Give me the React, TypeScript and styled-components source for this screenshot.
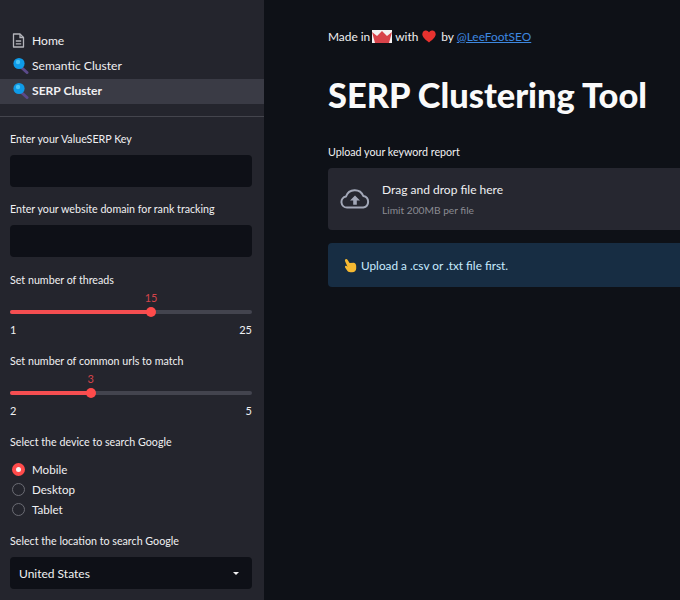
import React from 'react';
import styled, { createGlobalStyle } from 'styled-components';

const fontStack = `Lato, "Noto Sans", sans-serif`;

const GlobalStyle = createGlobalStyle`
  html, body { margin: 0; padding: 0; background: #0e1117; }
  body { font-family: ${fontStack}; overflow: hidden; }
  * { box-sizing: border-box; }
`;

const Page = styled.div`
  width: 680px;
  height: 600px;
  display: flex;
  overflow: hidden;
  background: #0e1117;
  color: #fafafa;
`;

const Sidebar = styled.aside`
  width: 264px;
  flex: none;
  height: 600px;
  overflow: hidden;
  background: #24252d;
  padding-top: 29px;
`;

const Nav = styled.nav`
  display: flex;
  flex-direction: column;
  padding-bottom: 12px;
  border-bottom: 1px solid #44454d;
`;

const NavItem = styled.a<{ $active?: boolean }>`
  height: 25px;
  display: flex;
  align-items: center;
  gap: 3px;
  padding-left: 12px;
  padding-bottom: 2px;
  font-size: 12.1px;
  font-weight: ${p => (p.$active ? 700 : 400)};
  color: #f0f0f2;
  background: ${p => (p.$active ? '#3a3b45' : 'transparent')};
`;

const NavIcon = styled.svg`
  width: 17px;
  height: 17px;
  flex: none;
`;

const Controls = styled.div`
  display: flex;
  flex-direction: column;
  padding: 15px 12px 0 10px;
`;

const Label = styled.label`
  display: block;
  font-size: 10.7px;
  line-height: 14px;
  color: #f0f0f2;
`;

const Field = styled.div<{ $mb?: number }>`
  margin-bottom: ${p => p.$mb ?? 15}px;
`;

const TextInput = styled.div`
  height: 32px;
  margin-top: 9px;
  border-radius: 4px;
  background: #0e1017;
`;

const SliderBox = styled.div`
  position: relative;
  height: 52px;
  margin-top: 3px;
`;

const Track = styled.div`
  position: absolute;
  left: 0;
  right: 0;
  top: 20px;
  height: 4px;
  border-radius: 2px;
  background: #43444e;
`;

const TrackFill = styled.div`
  height: 100%;
  border-radius: 2px;
  background: #f54e51;
`;

const Thumb = styled.div`
  position: absolute;
  top: 17px;
  width: 10px;
  height: 10px;
  margin-left: -5px;
  border-radius: 50%;
  background: #ff4b4b;
`;

const SliderValue = styled.span`
  position: absolute;
  top: 1px;
  transform: translateX(-50%);
  font-size: 11px;
  line-height: 14px;
  color: #d2444a;
`;

const SliderEnds = styled.div`
  position: absolute;
  left: 0;
  right: 0;
  top: 33px;
  display: flex;
  justify-content: space-between;
  font-size: 11px;
  line-height: 14px;
  color: #f0f0f2;
`;

const RadioGroup = styled.div`
  display: flex;
  flex-direction: column;
  margin-top: 10px;
`;

const RadioRow = styled.div`
  height: 20.4px;
  display: flex;
  align-items: center;
  gap: 7px;
  padding-left: 2px;
  font-size: 11.6px;
  color: #f0f0f2;
`;

const RadioDot = styled.span<{ $on?: boolean }>`
  width: 13px;
  height: 13px;
  border-radius: 50%;
  flex: none;
  background: ${p => (p.$on ? '#ff4b4b' : 'transparent')};
  border: ${p => (p.$on ? '4px solid #ff4b4b' : '1.5px solid #6b6c74')};
  position: relative;
  &::after {
    content: '';
    display: ${p => (p.$on ? 'block' : 'none')};
    position: absolute;
    inset: 0;
    border-radius: 50%;
    background: #f6f6f6;
  }
`;

const Select = styled.div`
  height: 32px;
  margin-top: 9px;
  padding: 0 13px 0 9px;
  display: flex;
  align-items: center;
  justify-content: space-between;
  border-radius: 4px;
  background: #0e1017;
  font-size: 12px;
  color: #f0f0f2;
`;

const Caret = styled.span`
  width: 0;
  height: 0;
  border-left: 3.5px solid transparent;
  border-right: 3.5px solid transparent;
  border-top: 3.5px solid #f0f0f2;
`;

const Main = styled.main`
  flex: 1;
  min-width: 0;
  padding: 28px 0 0 64px;
`;

const Byline = styled.p`
  margin: 0;
  display: flex;
  align-items: center;
  height: 16px;
  font-size: 11.9px;
  color: #f0f0f2;
`;

const BylineLink = styled.a`
  color: #3d88e0;
  text-decoration: underline;
`;

const Title = styled.h1`
  margin: 29px 0 0;
  font-size: 34.4px;
  line-height: 44px;
  font-weight: 900;
  color: #fafafa;
  white-space: nowrap;
`;

const UploadLabel = styled(Label)`
  margin-top: 28px;
`;

const Dropzone = styled.div`
  height: 62px;
  margin-top: 9px;
  padding-left: 12px;
  display: flex;
  align-items: center;
  gap: 12px;
  border-radius: 4px 0 0 4px;
  background: #262730;
`;

const DropText = styled.div`
  display: flex;
  flex-direction: column;
  gap: 5px;
`;

const DropTitle = styled.span`
  font-size: 12px;
  line-height: 17px;
  color: #f0f0f2;
`;

const DropHint = styled.span`
  font-size: 10.2px;
  line-height: 14px;
  color: #8a8b92;
`;

const Notice = styled.div`
  height: 44px;
  margin-top: 13px;
  padding-left: 15px;
  display: flex;
  align-items: center;
  gap: 4px;
  border-radius: 4px 0 0 4px;
  background: #172d43;
  font-size: 11.8px;
  color: #c7ebff;
`;

const SearchIcon = () => (
  <NavIcon viewBox="0 0 17 17">
    <line x1="10" y1="11" x2="15" y2="15.5" stroke="#5b4a8a" strokeWidth="3" strokeLinecap="round" />
    <circle cx="7" cy="6.5" r="5.6" fill="#0e9be8" />
    <circle cx="6" cy="5" r="2.2" fill="#4cc4f5" />
  </NavIcon>
);

const PageIcon = () => (
  <NavIcon viewBox="0 0 17 17" fill="none" stroke="#b4b5bb" strokeWidth="1.3">
    <path d="M1.500 2h6.500l3.500 3.500V15h-10z" strokeLinejoin="round" />
    <path d="M8 2v3.500h3.500M3.800 9h5.400M3.800 11.800h5.400" />
  </NavIcon>
);

const CrownFlag = () => (
  <svg width="20" height="13" viewBox="0 0 20 13" style={{ margin: '0 3px 0 2px' }}>
    <rect width="20" height="13" fill="#f4f2f2" />
    <path d="M0 2l5 4 5-5 5 5 5-4-3 11H3z" fill="#d8434a" />
  </svg>
);

const Heart = () => (
  <svg width="14" height="13" viewBox="0 0 14 13" style={{ margin: '0 5px 0 4px' }}>
    <path d="M7 12.5C2 8.6.3 6.5.3 4A3.6 3.6 0 0 1 7 2.2 3.6 3.6 0 0 1 13.7 4c0 2.5-1.7 4.6-6.7 8.5z" fill="#e8322f" />
  </svg>
);

const CloudUpload = () => (
  <svg width="30" height="20" viewBox="0 0 30 20" fill="none">
    <path
      d="M7 18.6a5.6 5.6 0 0 1-1-11.1A9.2 9.2 0 0 1 23.3 7a5.9 5.9 0 0 1 0 11.6z"
      stroke="#a3a8b8"
      strokeWidth="2"
      strokeLinejoin="round"
    />
    <path d="M15 6.5l-5 5h3.2v4.3h3.6v-4.3H20z" fill="#a3a8b8" />
  </svg>
);

const PointingHand = () => (
  <svg width="14" height="15" viewBox="0 0 14 15">
    <path
      d="M2.5 1.2c.8-.6 1.6-.2 2 .5L6.6 5l4-.2c1.5.1 2.6 1.4 2.6 3.2v2.5c0 2.300-1.700 3.800-4 3.800H7.500c-1.700 0-2.900-.8-3.700-2.200L2.100 9.400c-.3-.7 0-1.400.6-1.600.6-.2 1.100 0 1.500.6l.4.6-2.400-5.600c-.4-.9-.4-1.700.3-2.200z"
      fill="#f5b932"
    />
  </svg>
);

const Slider = ({ min, max, value, pct }: { min: number; max: number; value: number; pct: number }) => (
  <SliderBox>
    <SliderValue style={{ left: `${pct}%` }}>{value}</SliderValue>
    <Track>
      <TrackFill style={{ width: `${pct}%` }} />
    </Track>
    <Thumb style={{ left: `${pct}%` }} />
    <SliderEnds>
      <span>{min}</span>
      <span>{max}</span>
    </SliderEnds>
  </SliderBox>
);

export default function App() {
  return (
    <>
      <GlobalStyle />
      <Page>
        <Sidebar>
          <Nav>
            <NavItem><PageIcon />Home</NavItem>
            <NavItem><SearchIcon />Semantic Cluster</NavItem>
            <NavItem $active><SearchIcon />SERP Cluster</NavItem>
          </Nav>
          <Controls>
            <Field>
              <Label>Enter your ValueSERP Key</Label>
              <TextInput />
            </Field>
            <Field $mb={16}>
              <Label>Enter your website domain for rank tracking</Label>
              <TextInput />
            </Field>
            <Field $mb={12}>
              <Label>Set number of threads</Label>
              <Slider min={1} max={25} value={15} pct={58.3} />
            </Field>
            <Field $mb={12}>
              <Label>Set number of common urls to match</Label>
              <Slider min={2} max={5} value={3} pct={33.3} />
            </Field>
            <Field $mb={14}>
              <Label>Select the device to search Google</Label>
              <RadioGroup>
                <RadioRow><RadioDot $on />Mobile</RadioRow>
                <RadioRow><RadioDot />Desktop</RadioRow>
                <RadioRow><RadioDot />Tablet</RadioRow>
              </RadioGroup>
            </Field>
            <Field>
              <Label>Select the location to search Google</Label>
              <Select>
                United States
                <Caret />
              </Select>
            </Field>
          </Controls>
        </Sidebar>
        <Main>
          <Byline>
            Made in <CrownFlag /> with <Heart /> by&nbsp;<BylineLink>@LeeFootSEO</BylineLink>
          </Byline>
          <Title>SERP Clustering Tool</Title>
          <UploadLabel>Upload your keyword report</UploadLabel>
          <Dropzone>
            <CloudUpload />
            <DropText>
              <DropTitle>Drag and drop file here</DropTitle>
              <DropHint>Limit 200MB per file</DropHint>
            </DropText>
          </Dropzone>
          <Notice>
            <PointingHand />
            Upload a .csv or .txt file first.
          </Notice>
        </Main>
      </Page>
    </>
  );
}
